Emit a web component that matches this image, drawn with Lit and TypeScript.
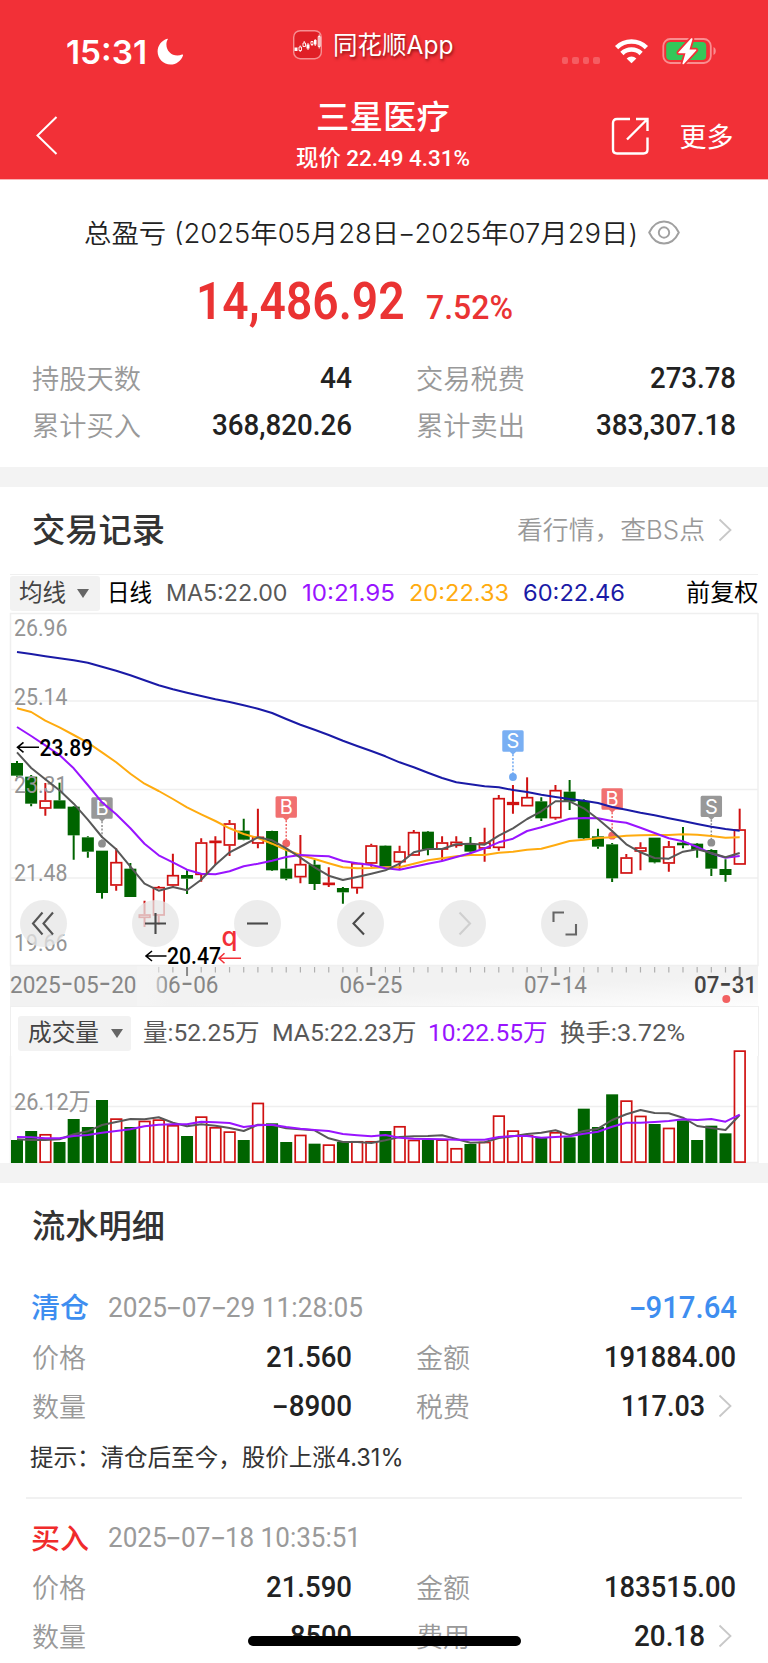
import { LitElement, html, svg, css } from "lit";
import { customElement, property, query } from "lit/decorators.js";
import { classMap } from "lit/directives/class-map.js";

/** Single line of text condensed or expanded to an exact advance width. */
@customElement("fit-text")
class FitText extends LitElement {
  static styles = css`
    :host { display: inline-block; white-space: pre; }
    .run { display: inline-block; transform-origin: 0 50%; }
  `;
  @property({ type: Number }) w = 0;
  @query(".run") run!: HTMLElement;

  firstUpdated() {
    const natural = this.run.getBoundingClientRect().width;
    if (!natural || !this.w) return;
    this.style.width = `${this.w}px`;
    this.run.style.transform = `scaleX(${this.w / natural})`;
  }

  render() {
    return html`<span class="run"><slot></slot></span>`;
  }
}

// Candles: [rising, high, body top, body bottom, low]; three units per pixel.
const CANDLES: number[][] = [
  [0, 588, 594, 632, 635], [0, 630, 635, 716, 724], [1, 654, 706, 731, 752], [0, 653, 706, 731, 731],
  [0, 723, 725, 811, 884], [0, 814, 817, 860, 878], [0, 857, 857, 984, 1001], [1, 850, 891, 962, 977],
  [0, 894, 911, 996, 996], [1, 1007, 1048, 1059, 1086], [1, 963, 966, 1052, 1080], [1, 866, 930, 962, 966],
  [0, 916, 930, 941, 987], [1, 820, 832, 930, 950], [1, 814, 827, 832, 900], [1, 765, 775, 842, 873],
  [0, 761, 797, 824, 826], [1, 731, 815, 836, 850], [0, 797, 798, 916, 918], [0, 848, 911, 941, 946],
  [1, 810, 897, 937, 955], [0, 885, 899, 957, 975], [1, 907, 953, 960, 966], [0, 966, 969, 982, 1016],
  [1, 893, 894, 970, 986], [1, 836, 841, 896, 905], [0, 841, 842, 905, 905], [1, 842, 859, 892, 912],
  [1, 795, 801, 872, 872], [0, 798, 800, 853, 871], [1, 814, 832, 854, 887], [1, 814, 830, 843, 848],
  [0, 816, 837, 860, 866], [1, 788, 832, 851, 890], [1, 690, 699, 849, 857], [1, 660, 711, 720, 746],
  [1, 637, 696, 724, 724], [0, 697, 709, 760, 768], [1, 660, 675, 760, 764], [0, 645, 680, 710, 735],
  [0, 703, 708, 820, 822], [0, 791, 814, 845, 851], [0, 834, 838, 940, 951], [1, 867, 877, 926, 926],
  [1, 832, 847, 860, 916], [0, 818, 818, 892, 895], [1, 828, 844, 896, 920], [0, 786, 833, 841, 850],
  [0, 834, 836, 855, 878], [0, 853, 855, 911, 933], [0, 883, 912, 930, 950], [1, 731, 793, 899, 899],
];
const MA5 = [562, 609, 643, 676, 716, 764, 816, 853, 905, 956, 977, 966, 976, 944, 899, 862, 840, 817, 826, 850, 878, 907, 932, 945, 936, 926, 916, 896, 862, 852, 852, 838, 836, 839, 812, 790, 762, 739, 709, 709, 730, 762, 798, 838, 862, 879, 881, 860, 853, 864, 877, 864];
const MA10 = [486, 513, 541, 570, 610, 660, 712, 748, 790, 836, 871, 892, 914, 926, 928, 919, 904, 896, 887, 876, 870, 872, 874, 888, 895, 900, 910, 914, 905, 896, 888, 876, 865, 850, 832, 821, 798, 787, 774, 761, 759, 760, 768, 773, 788, 804, 820, 829, 846, 865, 878, 873];
const MA20 = [430, 441, 467, 487, 510, 533, 562, 592, 626, 656, 678, 702, 727, 748, 768, 790, 807, 819, 836, 855, 870, 882, 895, 907, 910, 909, 907, 907, 896, 886, 880, 874, 870, 870, 863, 860, 854, 851, 840, 828, 824, 819, 817, 812, 811, 810, 810, 808, 809, 813, 818, 817];
const MA60 = [261, 267, 274, 280, 286, 293, 305, 317, 331, 346, 361, 373, 383, 393, 403, 411, 421, 431, 444, 462, 479, 494, 510, 527, 543, 558, 574, 592, 607, 623, 639, 652, 658, 664, 667, 675, 681, 689, 696, 702, 707, 714, 726, 734, 743, 751, 760, 768, 777, 785, 792, 797];
const VOLUME = [420, 393, 402, 426, 357, 381, 300, 355, 381, 362, 358, 375, 408, 349, 381, 394, 420, 308, 370, 426, 404, 431, 433, 426, 423, 423, 393, 378, 419, 419, 418, 444, 432, 425, 346, 391, 405, 412, 396, 412, 326, 381, 283, 301, 347, 372, 383, 361, 420, 377, 400, 151];
const VMA5 = [418, 420, 420, 418, 403, 394, 375, 366, 357, 358, 352, 368, 379, 373, 377, 384, 393, 374, 375, 385, 388, 391, 415, 426, 426, 429, 421, 411, 409, 408, 406, 417, 428, 427, 414, 409, 402, 398, 391, 405, 393, 386, 360, 343, 330, 339, 340, 353, 378, 384, 390, 345];
const VMA10 = [411, 412, 415, 415, 408, 405, 398, 393, 388, 379, 374, 373, 373, 365, 367, 369, 381, 376, 374, 381, 386, 390, 393, 402, 406, 409, 405, 413, 416, 417, 418, 419, 419, 419, 411, 408, 408, 413, 411, 409, 401, 395, 380, 368, 368, 366, 363, 358, 360, 357, 365, 344];

const RED = "#d01111";
const GREEN = "#006400";
const dayX = (i: number) => 17 + 14.17 * i;

const polyline = (values: number[], y: (v: number) => number, color: string) => svg`
  <polyline fill="none" stroke=${color} stroke-width="2" stroke-linejoin="round"
    points=${values.map((v, i) => `${dayX(i).toFixed(1)},${y(v).toFixed(1)}`).join(" ")} />`;

@customElement("price-chart")
class PriceChart extends LitElement {
  static styles = css`
    :host { display: block; position: relative; height: 353px; }
    svg { display: block; overflow: visible; }
    .scale { font: 400 23.5px Roboto, sans-serif; fill: #949494; }
    .peak { font: 500 23.5px Roboto, sans-serif; fill: #000; }
    .flag { font: 400 20px Inter, sans-serif; fill: #fff; }
    .ex { font: 500 26px Inter, sans-serif; fill: #f23037; }
    .tools { position: absolute; left: 20px; top: 287px; display: flex; }
    .tool { display: grid; place-items: center; width: 47px; height: 47px; border-radius: 50%; background: rgba(230, 230, 230, 0.76); }
    .tool.first { margin-right: 65px; }
    .tool.gap { margin-right: 55.3px; }
  `;

  y = (v: number) => (v - 144) / 3;

  candle([up, high, top, bottom, low]: number[], i: number) {
    const x = dayX(i);
    const { y } = this;
    const color = up ? RED : GREEN;
    const h = y(bottom) - y(top);
    return svg`
      <path stroke=${color} stroke-width="2" d="M${x} ${y(high)}V${y(top)}M${x} ${y(bottom)}V${y(low)}" />
      ${up
        ? svg`<rect x=${x - 5.2} y=${y(top) + 0.7} width="10.6" height=${Math.max(h - 1.4, 1)} fill="none" stroke=${color} stroke-width="1.7" />`
        : svg`<rect x=${x - 6} y=${y(top)} width="12" height=${h} fill=${color} />`}`;
  }

  marker(i: number, top: number, dot: number, letter: string, color: string) {
    const x = dayX(i);
    const t = this.y(top);
    return svg`
      <path fill=${color} opacity=".92" d="M${x - 9.2} ${t}h18.4q1.5 0 1.5 1.5v18.4q0 1.5 -1.5 1.5h-6l-3.2 3-3.2-3h-6q-1.5 0 -1.5-1.5v-18.4q0-1.5 1.5-1.5z" />
      <path stroke=${color} stroke-width="1.5" stroke-dasharray="2 1.6" d="M${x} ${t + 24}V${this.y(dot) - 3}" />
      <circle cx=${x} cy=${this.y(dot)} r="3.9" fill=${color} />
      <text class="flag" x=${x} y=${t + 18} text-anchor="middle">${letter}</text>`;
  }

  scaleLabel(text: string, baseline: number) {
    return svg`<text class="scale" x="14" y=${baseline} textLength="53.5" lengthAdjust="spacingAndGlyphs">${text}</text>`;
  }

  render() {
    const { y } = this;
    return html`
      <svg width="768" height="353" viewBox="0 0 768 353">
        <path stroke="#efefef" stroke-width="1.5" fill="none" d="M10.5 0V352.5H758V0M10 .5H758M10 88H758M10 176.5H758M10 265H758" />
        ${CANDLES.map((c, i) => this.candle(c, i))}
        ${this.scaleLabel("26.96", 22.8)}${this.scaleLabel("25.14", 91.5)}${this.scaleLabel("23.31", 179.8)}
        ${this.scaleLabel("21.48", 268.3)}${this.scaleLabel("19.66", 337.8)}
        ${this.marker(6, 697, 836, "B", "#8f8f8f")}
        ${this.marker(19, 694, 835, "B", "#f06464")}
        ${this.marker(35, 496, 636, "S", "#6ea8f2")}
        ${this.marker(42, 670, 812, "B", "#f06464")}
        ${this.marker(49, 692, 833, "S", "#8f8f8f")}
        ${polyline(MA60, y, "#1a1aa6")}
        ${polyline(MA20, y, "#ffab0f")}
        ${polyline(MA10, y, "#9914ff")}
        ${polyline(MA5, y, "#585858")}
        <path fill="none" stroke="#000" stroke-width="1.6" d="M39 134.3H17.5m6-5-6 5 6 5M166.5 343H146m6-5-6 5 6 5" />
        <text class="peak" x="39.5" y="142.8" textLength="53.5" lengthAdjust="spacingAndGlyphs">23.89</text>
        <text class="peak" x="167" y="351" textLength="54" lengthAdjust="spacingAndGlyphs">20.47</text>
        <text class="ex" x="221.5" y="332.5" textLength="16" lengthAdjust="spacingAndGlyphs">q</text>
        <path fill="none" stroke="#f23037" stroke-width="1.5" d="M241 345.3H219m5.5-5-5.5 5 5.5 5" />
      </svg>
      <div class="tools">
        <span class="tool first">${this.icon("M22.5 12.5 13 23.5l9.5 11M33 12.5 23.5 23.5l9.5 11", "#555")}</span>
        <span class="tool gap">${this.icon("M13 23.5H34M23.5 13V34", "#4a4a4a")}</span>
        <span class="tool gap">${this.icon("M13 23.5H34", "#4a4a4a")}</span>
        <span class="tool gap">${this.icon("M27 12.5 16.5 23.5l10.5 11", "#4a4a4a")}</span>
        <span class="tool gap">${this.icon("M20.5 12.5 31 23.5l-10.5 11", "#cfcfcf")}</span>
        <span class="tool">${this.icon("M12.5 22V12.5H23M35 24V34.5H24.5", "#666")}</span>
      </div>`;
  }

  icon(d: string, color: string) {
    return html`<svg width="47" height="47" viewBox="0 0 47 47"><path d=${d} fill="none" stroke=${color} stroke-width="2.1" /></svg>`;
  }
}

@customElement("date-axis")
class DateAxis extends LitElement {
  static styles = css`
    :host { display: block; height: 40px; }
    svg { display: block; }
    text { font: 400 24px Roboto, sans-serif; fill: #868686; }
    .dash { font-family: Inter, sans-serif; font-size: 29px; }
    .now { fill: #444; font-weight: 500; }
  `;

  // Dashes sit wider than the face's own hyphen, so they are set from Inter.
  label(text: string, x: number, w: number, cls = "") {
    return svg`<text class=${cls} x=${x} y="27.2" textLength=${w} lengthAdjust="spacingAndGlyphs">${text
      .split("-")
      .map((part, i) => (i ? svg`<tspan class="dash">-</tspan>${part}` : part))}</text>`;
  }

  render() {
    return html`
      <svg width="768" height="40" viewBox="0 0 768 40">
        <defs>
          <linearGradient id="base" x1="0" y1="0" x2="1" y2="1">
            <stop offset="0" stop-color="#f2f2f2" /><stop offset=".6" stop-color="#f2f2f2" /><stop offset="1" stop-color="#fdfdfd" />
          </linearGradient>
          <linearGradient id="fade"><stop offset="0" stop-color="#f4f4f4" /><stop offset=".3" stop-color="#f4f4f4" /><stop offset="1" stop-color="#f4f4f4" stop-opacity="0" /></linearGradient>
        </defs>
        <rect x="10" width="748" height="40" fill="url(#base)" />
        ${Array.from({ length: 43 }, (_, k) => k + 9).map((i) => {
          const major = i === 12 || i === 25 || i === 38 || i === 51;
          return svg`<path stroke=${major ? "#8a8a8a" : "#b0b0b0"} stroke-width=${major ? 2 : 1.2} d="M${dayX(i)} 1V${major ? 10 : 6.5}" />`;
        })}
        ${this.label("06-06", 155.5, 63)}
        <rect x="137" y="0" width="32" height="40" fill="url(#fade)" />
        ${this.label("2025-05-20", 10, 126.5)}
        ${this.label("06-25", 339.5, 63)}${this.label("07-14", 524, 63)}
        ${this.label("07-31", 694, 63, "now")}
        <circle cx="726.3" cy="33" r="4" fill="#f26161" />
      </svg>`;
  }
}

@customElement("volume-chart")
class VolumeChart extends LitElement {
  static styles = css`
    :host { display: block; height: 107px; }
    svg { display: block; overflow: visible; }
    text { font: 400 24px Roboto, "Noto Sans CJK SC", sans-serif; fill: #949494; }
  `;

  y = (v: number) => v / 3 - 56;

  render() {
    const { y } = this;
    return html`
      <svg width="768" height="107" viewBox="0 0 768 107">
        <path stroke="#efefef" stroke-width="1.5" fill="none" d="M10.5 0V106.5H758V0M10 50.5H758" />
        <text x="14" y="53.5" textLength="76.5" lengthAdjust="spacingAndGlyphs">26.12万</text>
        ${VOLUME.map((v, i) =>
          CANDLES[i][0]
            ? svg`<rect x=${dayX(i) - 5.2} y=${y(v) + 0.8} width="10.6" height=${105.3 - y(v)} fill="#fff" stroke=${RED} stroke-width="1.7" />`
            : svg`<rect x=${dayX(i) - 6} y=${y(v)} width="12" height=${107 - y(v)} fill=${GREEN} />`
        )}
        ${polyline(VMA5, y, "#585858")}
        ${polyline(VMA10, y, "#9914ff")}
      </svg>`;
  }
}

interface Cell { label: string; lw: number; value: string; vw: number; more?: boolean; }

@customElement("app-root")
class AppRoot extends LitElement {
  static styles = css`
    :host {
      display: block; position: relative; width: 768px; height: 1663px; overflow: hidden; background: #fff;
      font-family: Roboto, "Noto Sans CJK SC", sans-serif; color: #333;
    }
    svg { display: block; flex: none; }
    .dash { display: inline-block; font-family: Inter, sans-serif; transform: scaleX(1.4); margin: 0 0.05em; }
    .top { box-sizing: border-box; height: 180px; background: #f23037; color: #fff; border-bottom: 1px solid #f9b3b5; }
    .status { display: flex; align-items: flex-start; height: 91px; }
    .time { font: 600 33px/40px Inter, sans-serif; margin: 32px 0 0 66px; }
    .moon { margin: 38px 0 0 10px; }
    .app { display: flex; margin: 27px 0 0 109px; gap: 10.5px; align-items: center; }
    .app-name { font: 400 25px/36px Inter, "Noto Sans CJK SC", sans-serif; text-shadow: 1px 2px 3px rgba(70, 0, 0, 0.6); }
    .signal { display: flex; gap: 4px; margin: 57px 0 0 108.5px; }
    .signal-dot { width: 6.5px; height: 6.5px; border-radius: 2px; background: rgba(255, 255, 255, 0.22); }
    .wifi { margin: 38px 0 0 14px; }
    .battery { margin: 36px 0 0 13.5px; }
    .nav { display: flex; align-items: flex-start; height: 88px; }
    .back { margin: 25px 0 0 34px; }
    .titles { display: flex; flex-direction: column; align-items: center; width: 176px; margin-left: 236px; }
    .title { font: 500 33.5px/40px "Noto Sans CJK SC", sans-serif; margin-top: 4px; }
    .quote { font-size: 22.5px; line-height: 30px; font-weight: 500; margin-top: 8px; }
    .share { margin: 25px 0 0 139.5px; }
    .more { font: 400 27px/40px "Noto Sans CJK SC", sans-serif; margin: 25px 0 0 31px; }
    .period { display: flex; align-items: center; height: 40px; margin: 33px 0 0 84px; gap: 10px; font: 350 26.5px/40px Inter, "Noto Sans CJK SC", sans-serif; color: #222; }
    .total { display: flex; align-items: baseline; margin: 16px 0 0 195.5px; gap: 22px; color: #ea3333; line-height: 65px; height: 64px; }
    .amount { font-size: 51px; font-weight: 600; }
    .rate { font-size: 33px; font-weight: 500; }
    .grid { display: grid; grid-template-columns: 1fr 1fr; column-gap: 64px; padding: 0 32px; }
    .cell { display: flex; justify-content: space-between; align-items: center; height: 47.5px; }
    .entry .cell { height: 48.8px; }
    .cell.more-cell { justify-content: flex-start; }
    .label { font-weight: 350; font-size: 27px; line-height: 40px; font-family: "Noto Sans CJK SC", sans-serif; color: #999; }
    .value { font-weight: 500; font-size: 29.5px; line-height: 40px; color: #222; margin-left: auto; }
    .arrow { margin: 0 4.5px 0 13px; }
    .summary { padding-top: 21px; height: 134px; box-sizing: border-box; }
    .band { height: 20px; background: #f3f3f3; }
    .head { display: flex; align-items: center; justify-content: space-between; height: 87px; box-sizing: border-box; padding: 0 32px; }
    .heading { font: 500 33px/40px "Noto Sans CJK SC", sans-serif; color: #333; margin-bottom: 5px; }
    .link { display: flex; align-items: center; font: 350 25.5px/40px Inter, "Noto Sans CJK SC", sans-serif; color: #999; margin-bottom: 1px; }
    .link .arrow { margin: 0 4.5px 0 13px; }
    .bar { display: flex; align-items: center; height: 39px; margin: 0 10px; font: 400 23px/34px Inter, "Noto Sans CJK SC", sans-serif; color: #585858; box-sizing: border-box; border-top: 1.5px solid #f0f0f0; padding-bottom: 2px; }
    .pick { display: flex; align-items: center; background: #f2f2f2; border-radius: 3px; height: 35px; font-size: 24px; color: #444; box-sizing: border-box; }
    .ma-pick { width: 90px; padding-left: 9px; gap: 10.5px; }
    .vol-pick { width: 113px; padding-left: 10px; gap: 12px; }
    .black { color: #000; font-size: 23.5px; }
    .purple { color: #9914ff; }
    .orange { color: #ffab0f; }
    .navy { color: #1a1aa6; }
    .daily { margin: 0 14px 0 7px; }
    .g1 { margin-left: 14px; }
    .adjust { margin-left: auto; }
    .vol { height: 50px; border: 1.5px solid #efefef; border-bottom: 0; padding: 3px 0 0 7px; margin-right: 9px; }
    .vol-item { font-family: Roboto, "Noto Sans CJK SC", sans-serif; font-size: 24px; margin-left: 12px; }
    .flow-head { height: 87px; display: flex; align-items: center; padding-left: 32px; }
    .entry { padding-top: 12px; }
    .entry-top { display: flex; align-items: center; height: 50.5px; padding: 0 31px 0 31px; }
    .kind { font: 500 28.5px/40px "Noto Sans CJK SC", sans-serif; margin-bottom: 2px; }
    .sell { color: #3e8ef0; }
    .buy { color: #f02b2b; }
    .when { font-size: 28px; line-height: 40px; font-weight: 400; color: #9a9a9a; margin-left: 18.5px; }
    .profit { font-size: 31.5px; line-height: 40px; font-weight: 500; margin-left: auto; color: #3e8ef0; }
    .tip { font: 400 24px/40px Inter, "Noto Sans CJK SC", sans-serif; padding-left: 30px; margin-top: 7.5px; height: 40px; }
    .rule { height: 2px; margin: 19.5px 26px 0; background: #f1f1f1; }
    .entry.next { padding-top: 13.5px; }
    .home { position: absolute; left: 247.5px; top: 1636px; width: 273.5px; height: 10px; border-radius: 5px; background: #000; }
  `;

  dashed(text: string) {
    return text.split("-").map((part, i) => (i ? html`<span class="dash">-</span>${part}` : part));
  }

  chevron() {
    return html`<svg class="arrow" width="14" height="24" viewBox="0 0 14 24"><path d="M1.5 1.5 12.5 12 1.5 22.5" fill="none" stroke="#c8c8c8" stroke-width="1.8" /></svg>`;
  }

  caret() {
    return html`<svg width="12" height="9" viewBox="0 0 12 9"><path d="M0 0H12L6 9z" fill="#666" /></svg>`;
  }

  cells(items: Cell[]) {
    return html`<div class="grid">${items.map(
      (c) => html`<div class=${classMap({ cell: true, "more-cell": !!c.more })}>
        <fit-text class="label" w=${c.lw}>${c.label}</fit-text>
        <fit-text class="value" w=${c.vw}>${this.dashed(c.value)}</fit-text>
        ${c.more ? this.chevron() : ""}
      </div>`
    )}</div>`;
  }

  appIcon() {
    return html`<svg width="29" height="30" viewBox="0 0 29 30">
      <rect x=".7" y=".7" width="27.6" height="28" rx="6.5" fill="#e01f26" stroke="#f68f92" stroke-width="1.4" />
      <path fill="#fff" d="M1.5 17.5h3v3.5h-3zM13.5 14.5h3v4h-3zM21 10h2.5v4.5H21z" />
      <path fill="none" stroke="#fff" stroke-width=".9" d="M6 17h2.5v3.5H6zM7.2 15.5V17M7.2 20.5V22M10 13h2.5v3.5H10zM11.2 11v2M18 11.5h2v3h-2zM19 14.5V16M15 13v7M22.2 9v7M25.2 6.5h2v10h-2zM26.2 4.5v14" />
    </svg>`;
  }

  render() {
    return html`
      <header class="top">
        <div class="status">
          <fit-text class="time" w="81">15:31</fit-text>
          <svg class="moon" width="27" height="27" viewBox="0 0 27 27"><path fill="#fff" d="M10.2.8C4.5 2.6.6 7.7.6 13.6.6 20.8 6.4 26.5 13.6 26.5c5.6 0 10.5-3.7 12.4-9.1.2-.6-.4-1.1-1-.8-1.4.6-3 .9-4.6.9-6.2 0-11-4.8-11-11 0-1.7.3-3.3 1.2-4.7.4-.6.1-1.2-.4-1z" /></svg>
          <div class="app">${this.appIcon()}<fit-text class="app-name" w="120.5">同花顺App</fit-text></div>
          <div class="signal"><i class="signal-dot"></i><i class="signal-dot"></i><i class="signal-dot"></i><i class="signal-dot"></i></div>
          <svg class="wifi" width="35" height="26" viewBox="0 0 35 26">
            <g fill="none" stroke="#fff" stroke-width="4.6"><path d="M2.6 9.6a21.3 21.3 0 0 1 29.8 0" /><path d="M7.9 15.5a13.7 13.7 0 0 1 19.2 0" /></g>
            <path fill="#fff" d="M12.6 20.5a7 7 0 0 1 9.8 0L17.5 25.3z" />
          </svg>
          <svg class="battery" width="56" height="30" viewBox="0 0 56 30">
            <rect x="1.3" y="3" width="47.5" height="24" rx="7" fill="none" stroke="#f98d90" stroke-width="1.8" />
            <rect x="4.2" y="6" width="40" height="18" rx="4" fill="#34c759" />
            <path fill="#f98d90" d="M51.5 11c3 1.2 3 6.8 0 8z" />
            <path fill="#fff" stroke="#f23037" stroke-width="3.6" paint-order="stroke" stroke-linejoin="round" d="M29 2.5 16.5 16.3c-.4.5-.1 1 .5 1h6.5L20.5 27.3c-.2 1 .8 1.3 1.4.6L34.2 14.5c.4-.5.1-1-.5-1h-6.2L30.5 3.2c.2-1-.8-1.4-1.5-.7z" />
          </svg>
        </div>
        <div class="nav">
          <svg class="back" width="25" height="40" viewBox="0 0 25 40"><path d="M22.5 1 3.5 19.5 22.5 38" fill="none" stroke="#fff" stroke-width="2" /></svg>
          <div class="titles">
            <fit-text class="title" w="134">三星医疗</fit-text>
            <fit-text class="quote" w="174">现价 22.49 4.31%</fit-text>
          </div>
          <svg class="share" width="38" height="40" viewBox="0 0 38 40">
            <path d="M19 3H6Q2 3 2 7V33.5Q2 37.5 6 37.5H32.5Q36.5 37.5 36.5 33.5V21.5" fill="none" stroke="#fff" stroke-width="2.4" />
            <path d="M25 3H36.5V15M36.5 3 16 23.5" fill="none" stroke="#fff" stroke-width="2.4" />
          </svg>
          <fit-text class="more" w="54">更多</fit-text>
        </div>
      </header>

      <section>
        <div class="period">
          <fit-text w="554">总盈亏 (2025年05月28日${this.dashed("-")}2025年07月29日)</fit-text>
          <svg width="32" height="26" viewBox="0 0 32 26"><g fill="none" stroke="#a0a0a0" stroke-width="1.9"><path d="M1.2 12.5C4.5 5.5 10 1.5 16 1.5s11.5 4 14.8 11C27.5 19.5 22 23.5 16 23.5S4.5 19.5 1.2 12.5z" /><circle cx="16" cy="12.5" r="5.2" /></g></svg>
        </div>
        <div class="total">
          <fit-text class="amount" w="208.5">14,486.92</fit-text>
          <fit-text class="rate" w="87">7.52%</fit-text>
        </div>
        <div class="summary">${this.cells([
          { label: "持股天数", lw: 109, value: "44", vw: 32 },
          { label: "交易税费", lw: 109, value: "273.78", vw: 86 },
          { label: "累计买入", lw: 109, value: "368,820.26", vw: 140 },
          { label: "累计卖出", lw: 109, value: "383,307.18", vw: 140 },
        ])}</div>
      </section>
      <div class="band"></div>

      <section>
        <div class="head">
          <fit-text class="heading" w="133">交易记录</fit-text>
          <div class="link"><fit-text w="188">看行情，查BS点</fit-text>${this.chevron()}</div>
        </div>
        <div class="bar">
          <span class="pick ma-pick"><fit-text w="47">均线</fit-text>${this.caret()}</span>
          <fit-text class="black daily" w="45">日线</fit-text>
          <fit-text w="121.5">MA5:22.00</fit-text>
          <fit-text class="purple g1" w="93">10:21.95</fit-text>
          <fit-text class="orange g1" w="100">20:22.33</fit-text>
          <fit-text class="navy g1" w="102">60:22.46</fit-text>
          <fit-text class="black adjust" w="72.5">前复权</fit-text>
        </div>
        <price-chart></price-chart>
        <date-axis></date-axis>
        <div class="bar vol">
          <span class="pick vol-pick"><fit-text w="71">成交量</fit-text>${this.caret()}</span>
          <fit-text class="vol-item" w="116.5">量:52.25万</fit-text>
          <fit-text class="vol-item" w="144.5">MA5:22.23万</fit-text>
          <fit-text class="vol-item purple" w="119.5">10:22.55万</fit-text>
          <fit-text class="vol-item" w="125">换手:3.72%</fit-text>
        </div>
        <volume-chart></volume-chart>
      </section>
      <div class="band"></div>

      <section>
        <div class="flow-head"><fit-text class="heading" w="133">流水明细</fit-text></div>
        <div class="entry">
          <div class="entry-top">
            <fit-text class="kind sell" w="58">清仓</fit-text>
            <fit-text class="when" w="255">${this.dashed("2025-07-29 11:28:05")}</fit-text>
            <fit-text class="profit" w="108">${this.dashed("-917.64")}</fit-text>
          </div>
          ${this.cells([
            { label: "价格", lw: 54, value: "21.560", vw: 86 },
            { label: "金额", lw: 54, value: "191884.00", vw: 132 },
            { label: "数量", lw: 54, value: "-8900", vw: 79 },
            { label: "税费", lw: 54, value: "117.03", vw: 84, more: true },
          ])}
          <div class="tip"><fit-text w="373.5">提示：清仓后至今，股价上涨4.31%</fit-text></div>
          <div class="rule"></div>
        </div>
        <div class="entry next">
          <div class="entry-top">
            <fit-text class="kind buy" w="58">买入</fit-text>
            <fit-text class="when" w="253">${this.dashed("2025-07-18 10:35:51")}</fit-text>
          </div>
          ${this.cells([
            { label: "价格", lw: 54, value: "21.590", vw: 86 },
            { label: "金额", lw: 54, value: "183515.00", vw: 132 },
            { label: "数量", lw: 54, value: "8500", vw: 62 },
            { label: "费用", lw: 54, value: "20.18", vw: 71, more: true },
          ])}
        </div>
      </section>
      <div class="home"></div>`;
  }
}
